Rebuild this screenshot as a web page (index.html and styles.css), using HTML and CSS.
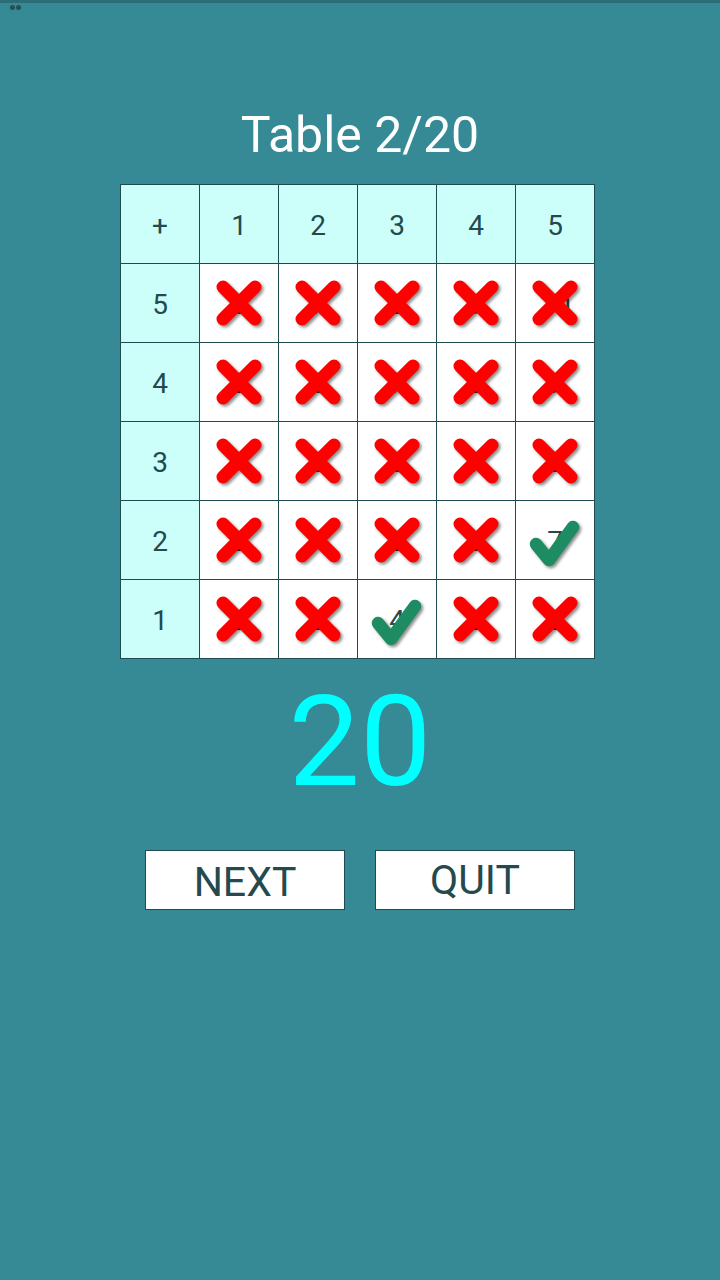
FILE: index.html
```html
<!DOCTYPE html>
<html>
<head>
<meta charset="utf-8">
<link rel="stylesheet" href="styles.css">
</head>
<body>
<div class="statusbar"><span class="dot"></span><span class="dot"></span></div>
<main class="screen">
  <h1 class="title">Table 2/20</h1>
  <div class="grid" id="grid">
    <div class="cell head">+</div>
    <div class="cell head">1</div>
    <div class="cell head">2</div>
    <div class="cell head">3</div>
    <div class="cell head">4</div>
    <div class="cell head">5</div>
  </div>
  <div class="score">20</div>
  <div class="buttons">
    <button class="btn btn-next">NEXT</button>
    <button class="btn btn-quit">QUIT</button>
  </div>
</main>
<script src="app.js"></script>
</body>
</html>
```
FILE: app.js
```js
(function () {
  var grid = document.getElementById('grid');
  var cross = '<svg class="mark" viewBox="0 0 78 78"><g fill="none" stroke="#ff0000" stroke-width="13" stroke-linecap="round"><line x1="23" y1="23" x2="55" y2="55"/><line x1="55" y1="23" x2="23" y2="55"/></g></svg>';
  var check = '<svg class="mark" viewBox="0 0 78 78"><polyline points="20,43 33,59 57,26" fill="none" stroke="#1e8c62" stroke-width="12.5" stroke-linecap="round" stroke-linejoin="round"/></svg>';
  var rows = [5, 4, 3, 2, 1];
  var checks = { '2-5': true, '1-3': true };
  rows.forEach(function (r) {
    var h = document.createElement('div');
    h.className = 'cell head';
    h.textContent = r;
    grid.appendChild(h);
    for (var c = 1; c <= 5; c++) {
      var d = document.createElement('div');
      d.className = 'cell body';
      d.innerHTML = '<span class="num">' + (r + c) + '</span>' + (checks[r + '-' + c] ? check : cross);
      grid.appendChild(d);
    }
  });
})();
```
FILE: styles.css
```css
html, body {
  margin: 0;
  padding: 0;
}
body {
  background: #358a95;
  width: 720px;
  height: 1280px;
  font-family: Roboto, "Noto Sans", sans-serif;
  overflow: hidden;
}
.statusbar {
  height: 14px;
  border-top: 3px solid #2a6d76;
  display: flex;
  gap: 1px;
  padding-left: 10px;
  box-sizing: border-box;
  padding-top: 2px;
}
.dot {
  width: 5px;
  height: 5px;
  border-radius: 50%;
  background: #2a4e55;
}
.screen {
  display: flex;
  flex-direction: column;
  align-items: center;
}
.title {
  margin: 96px 0 0 0;
  font-size: 50px;
  line-height: 50px;
  font-weight: 400;
  color: #ffffff;
}
.grid {
  margin-top: 24px;
  margin-right: 5px;
  display: grid;
  grid-template-columns: repeat(6, 78px);
  grid-auto-rows: 78px;
  gap: 1px;
  padding: 1px;
  background: #1f4a50;
}
.cell {
  position: relative;
  display: flex;
  align-items: center;
  justify-content: center;
  font-size: 28px;
  color: #24494e;
  padding-top: 3px;
  box-sizing: border-box;
}
.head {
  background: #ccfffa;
}
.body {
  background: #ffffff;
}
.mark {
  position: absolute;
  left: 0;
  top: 0;
  width: 78px;
  height: 78px;
  filter: drop-shadow(2px 2px 1.5px rgba(0, 0, 0, 0.45));
}
.score {
  margin-top: 19px;
  font-size: 127px;
  line-height: 127px;
  color: #00ffff;
}
.buttons {
  margin-top: 45px;
  display: flex;
  gap: 30px;
}
.btn {
  width: 200px;
  height: 60px;
  background: #ffffff;
  border: 1px solid #1f4a50;
  font-family: Roboto, "Noto Sans", sans-serif;
  font-size: 41px;
  color: #24494e;
  padding: 0;
  margin: 0;
  line-height: 58px;
}
.btn-next {
  padding-top: 2px;
}
.btn-quit {
  padding-bottom: 2px;
}
```
